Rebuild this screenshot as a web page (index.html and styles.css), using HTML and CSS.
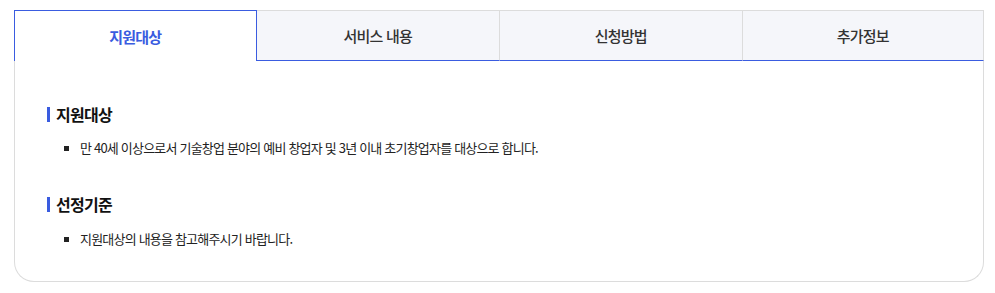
FILE: index.html
```html
<!DOCTYPE html>
<html lang="ko">
<head>
<meta charset="utf-8">
<link rel="stylesheet" href="styles.css">
</head>
<body>
<div class="tabbox">
  <div class="tabs">
    <div class="tab active">지원대상</div>
    <div class="tab">서비스 내용</div>
    <div class="tab">신청방법</div>
    <div class="tab">추가정보</div>
  </div>
  <div class="panel">
    <h3 class="title">지원대상</h3>
    <ul class="list">
      <li>만 40세 이상으로서 기술창업 분야의 예비 창업자 및 3년 이내 초기창업자를 대상으로 합니다.</li>
    </ul>
    <h3 class="title second">선정기준</h3>
    <ul class="list last">
      <li>지원대상의 내용을 참고해주시기 바랍니다.</li>
    </ul>
  </div>
</div>
</body>
</html>
```
FILE: styles.css
```css
* { box-sizing: border-box; }
html, body { margin: 0; padding: 0; background: #fff; }
body {
  font-family: "Noto Sans CJK KR", "Noto Sans", sans-serif;
  color: #222;
}
.tabbox {
  margin: 10px 11px 0 14px;
}
.tabs {
  display: grid;
  grid-template-columns: repeat(4, 1fr);
  height: 51px;
}
.tab {
  display: flex;
  align-items: center;
  justify-content: center;
  background: #f5f6fa;
  border-top: 1px solid #dcdcdc;
  border-left: 1px solid #dcdcdc;
  border-bottom: 1px solid #3a5ce0;
  font-size: 15px;
  font-weight: 500;
  color: #333;
  letter-spacing: -0.8px;
}
.tab:nth-child(2) { border-left: none; }
.tab:last-child { border-right: 1px solid #dcdcdc; }
.tab.active {
  background: #fff;
  border: 1px solid #3a5ce0;
  border-bottom: none;
  color: #3a5ce0;
  font-weight: 700;
}
.panel {
  border: 1px solid #dcdcdc;
  border-top: none;
  border-radius: 0 0 20px 20px;
  padding: 41px 32px 31px;
}
.title {
  margin: 0;
  display: flex;
  align-items: center;
  gap: 6px;
  font-size: 16px;
  line-height: 24px;
  font-weight: 700;
  color: #111;
  letter-spacing: -0.7px;
}
.title::before {
  content: "";
  width: 3px;
  height: 15px;
  background: #3a5ce0;
}
.title.second { margin-top: 33px; }
.list {
  list-style: none;
  margin: 11px 0 0;
  padding: 0 0 0 17px;
}
.list.last { margin-top: 12px; }
.list li {
  display: flex;
  align-items: center;
  gap: 11px;
  font-size: 13px;
  line-height: 22px;
  color: #222;
  letter-spacing: -0.8px;
}
.list li::before {
  content: "";
  width: 5px;
  height: 5px;
  background: #222;
  flex: none;
}
```
